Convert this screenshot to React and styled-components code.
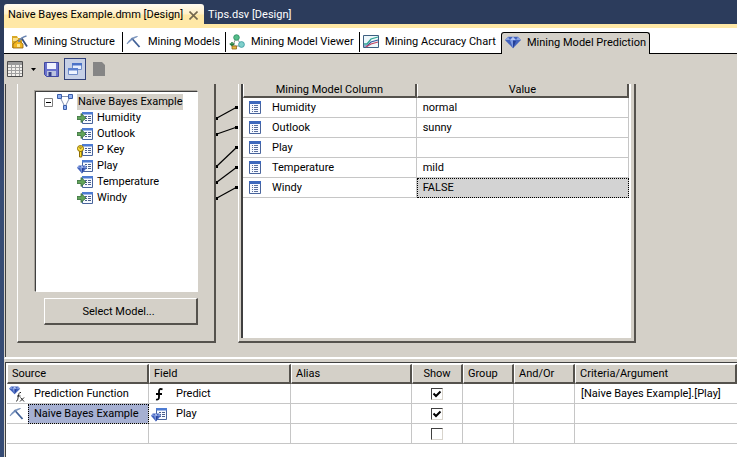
import React from "react";
import styled, { createGlobalStyle, css } from "styled-components";

const FACE = "#d4d0c8";
const DARK = "#404040";
const LINE = "#c6c6c6";
const NAVY = "#2c3c5c";

const Global = createGlobalStyle`
  *, *::before, *::after { box-sizing: border-box; }
  body { margin: 0; background: ${FACE}; }
  body, button, input, table {
    font: 11px/16px Roboto, "DejaVu Sans Condensed", sans-serif;
    color: #000;
  }
  button { margin: 0; padding: 0; border: 0; background: none; }
  svg { display: block; flex: none; }
`;

const Window = styled.div`
  display: flex;
  flex-direction: column;
  min-height: 100vh;
  padding-left: 4px;
  background: linear-gradient(${NAVY} 15%, #364b74 40%);
  overflow: hidden;
`;

const DocumentTabs = styled.div`
  display: flex;
  padding-top: 4px;
  border-bottom: 4px solid #ffe8a6;
  background: ${NAVY};
`;

const DocumentTab = styled.div`
  display: flex;
  align-items: center;
  justify-content: space-between;
  width: ${(p) => (p.$active ? "200px" : "auto")};
  height: 20px;
  padding: 2px 4px 0;
  white-space: nowrap;
  color: ${(p) => (p.$active ? "#000" : "#fff")};
  border-radius: 3px 3px 0 0;
  background: ${(p) => (p.$active ? "linear-gradient(#fffaf0, #fff0c8 50%, #ffe8a6 55%)" : "none")};
`;

const TabLabel = styled.button`
  color: inherit;
`;

const CloseButton = styled.button`
  display: grid;
  place-items: center;
  width: 14px;
  height: 14px;
`;

const ViewTabs = styled.div`
  display: flex;
  align-items: flex-end;
  height: 26px;
  background: linear-gradient(#000, #000) bottom / 100% 1px no-repeat #fff;
`;

const ViewTab = styled.button`
  display: flex;
  align-items: center;
  gap: 6px;
  width: ${(p) => p.$width}px;
  height: 22px;
  padding: 0 0 2px ${(p) => p.$inset}px;
  white-space: nowrap;
  ${(p) =>
    p.$active
      ? css`
          border: 1px solid #000;
          border-bottom: 0;
          border-radius: 3px 3px 0 0;
          background: ${FACE};
        `
      : css`
          background: ${p.$divided ? "linear-gradient(#000, #000) right top / 1px 20px no-repeat" : "none"};
        `}
`;

const Toolbar = styled.div`
  display: flex;
  align-items: center;
  gap: 2px;
  height: 30px;
  background: ${FACE};
`;

const ToolButton = styled.button`
  display: grid;
  place-items: center;
  width: ${(p) => (p.$narrow ? 10 : 22)}px;
  height: 22px;
  border: 1px solid ${(p) => (p.$pressed ? "#32427a" : "transparent")};
  background: ${(p) => (p.$pressed ? "#c6d0e6" : "none")};
`;

const Designer = styled.div`
  display: flex;
  align-items: flex-start;
  height: 275px;
  padding-left: 12px;
  border-left: 1px solid ${FACE};
  border-bottom: 2px solid #fff;
  background: linear-gradient(${DARK}, ${DARK}) left / 1px 100% no-repeat ${FACE};
`;

const ModelPanel = styled.section`
  display: flex;
  flex-direction: column;
  align-items: flex-end;
  gap: 6px;
  flex: none;
  width: 199px;
  height: 259px;
  padding: 7px 16px 16px;
  border: solid;
  border-width: 0 2px 2px 1px;
  border-color: #fff #55524d #55524d #fff;
`;

const Tree = styled.ul`
  flex: 1;
  width: 163px;
  margin: 0;
  padding: 2px 0 0 8px;
  list-style: none;
  border: 1px solid #fff;
  border-top-color: ${DARK};
  border-left-color: ${DARK};
  box-shadow: -1px -1px 0 #a8a49c;
  background: #fff;
`;

const TreeRoot = styled.div`
  display: flex;
  align-items: center;
  gap: 4px;
  height: 16px;
`;

const RootName = styled.span`
  padding: 0 1px;
  white-space: nowrap;
  background: ${FACE};
`;

const TreeChildren = styled.ul`
  margin: 0;
  padding: 0 0 0 33px;
  list-style: none;
`;

const TreeItem = styled.li`
  display: flex;
  align-items: center;
  gap: 4px;
  height: 16px;
`;

const SelectButton = styled.button`
  width: 154px;
  height: 27px;
  padding: 2px 4px 0 0;
  border: solid;
  border-width: 1px 2px 2px 1px;
  border-color: #fff #55524d #55524d #fff;
`;

const Connectors = styled.svg`
  flex: none;
  width: 22px;
  height: 130px;
`;

const ColumnsPanel = styled.section`
  flex: 0 1 398px;
  height: 259px;
  padding: 0 3px 3px 2px;
  border: solid;
  border-width: 0 2px 2px 1px;
  border-color: #fff #55524d #55524d #fff;
`;

const ColumnsBody = styled.div`
  height: 100%;
  padding-right: 2px;
  border-left: 2px solid ${DARK};
  background: #fff;
`;

const Table = styled.table`
  width: 100%;
  table-layout: fixed;
  border-collapse: separate;
  border-spacing: 0;
`;

const HeadCell = styled.th`
  height: ${(p) => p.$height}px;
  padding: 0 4px;
  font-weight: normal;
  line-height: 12px;
  white-space: nowrap;
  text-align: ${(p) => p.$align || "left"};
  border: solid;
  border-width: ${(p) => (p.$clipped ? 0 : 1)}px 2px 2px 1px;
  border-color: #fff #55524d #55524d #fff;
  background: ${FACE};
`;

const Cell = styled.td`
  height: 20px;
  padding: 0 0 0 ${(p) => p.$inset || 0}px;
  white-space: nowrap;
  text-align: ${(p) => p.$align || "left"};
  border-bottom: 1px solid ${LINE};
  border-right: ${(p) => (p.$open ? "0" : `1px solid ${LINE}`)};
  ${(p) =>
    p.$selected &&
    css`
      background: ${p.$selected};
      outline: 1px dotted #000;
      outline-offset: -1px;
    `}
`;

const IconText = styled.div`
  display: flex;
  align-items: center;
  gap: ${(p) => p.$gap}px;
`;

const QueryGrid = styled.section`
  flex: 1;
  padding: 1px 0 0 1px;
  border-top: 1px solid ${DARK};
  border-left: 1px solid ${DARK};
  background: #fff;
`;

const Gutter = styled.div`
  flex: 1;
  display: flex;
  flex-direction: column;
  padding: 3px 0 0 1px;
  background: ${FACE};
`;

const CheckBox = styled.input`
  appearance: none;
  display: block;
  width: 12px;
  height: 12px;
  margin: 0 auto;
  border: 1px solid #d8d4cc;
  border-top-color: ${DARK};
  border-left-color: ${DARK};
  background: #fff;
  &:checked {
    background: #fff url("data:image/svg+xml,%3Csvg xmlns='http://www.w3.org/2000/svg' viewBox='0 0 10 10'%3E%3Cpath d='M1.5 4.5 4 7 8.5 2.5' fill='none' stroke='%23000' stroke-width='2'/%3E%3C/svg%3E") center / 10px 10px no-repeat;
  }
`;

const Pick = () => (
  <svg width="16" height="16" viewBox="0 0 16 16" fill="none">
    <path d="M5.500 4 13.500 13" stroke="#3f5f96" strokeWidth="1.800" />
    <path d="M1 10C2.500 6.500 6 3 11.500 2.500L7 4.800z" fill="#5a7db8" stroke="#7e95bb" strokeWidth=".8" />
  </svg>
);

const StructureIcon = () => (
  <svg width="16" height="16" viewBox="0 0 16 16">
    <path d="M0 2h5l1 2h4v10H0z" fill="#d9a826" />
    <path d="M1 4h5v3H1z" fill="#fbe08a" />
    <path d="M1 14V10l5-4 5 4v4z" fill="#f2b51e" stroke="#8a6314" strokeWidth=".8" />
    <path d="M9.500 4 15 12.500" stroke="#39507c" strokeWidth="1.800" />
    <path d="M6.500 8C8 5 10 3 14.500 2" fill="none" stroke="#6b86b3" strokeWidth="1.500" />
    <path d="M5 10h3v3H5z" fill="#ffe68a" />
  </svg>
);

const ViewerIcon = () => (
  <svg width="16" height="16" viewBox="0 0 16 16" fill="none">
    <path d="M7 4 4 11M8 5l4 5M4 12h8" stroke="#8a8f8a" />
    <circle cx="7.500" cy="3.500" r="2.800" fill="#55bd8a" stroke="#2b8a5e" strokeWidth=".8" />
    <circle cx="12.500" cy="10.500" r="2.900" fill="#7fd0cb" stroke="#3a98a0" strokeWidth=".8" />
    <path d="M3 8v4M.8 9.500l2.200 2 2.500-2" stroke="#267f3f" strokeWidth="1.500" />
    <path d="M3 12h4.500v3H3z" fill="#e7b83d" stroke="#93661c" strokeWidth=".8" />
  </svg>
);

const ChartIcon = () => (
  <svg width="16" height="14" viewBox="0 0 16 14" fill="none">
    <path d="M.5.5h15v12H.5z" fill="#eef7fb" stroke="#3d5f81" />
    <path d="M1 9h3l4-5 7-2" stroke="#2da592" strokeWidth="1.300" />
    <path d="M1 11h3l4-4 7-2" stroke="#315ca0" strokeWidth="1.200" />
    <path d="M3 12l5-3 7-2" stroke="#c24562" strokeWidth="1.200" />
  </svg>
);

const GemShape = () => (
  <>
    <path d="M3 1h10l3 4-8 10L0 5z" fill="#4363bd" />
    <path d="M3 1 0 5h5zM13 1 11 5h5z" fill="#8ba4e3" />
    <path d="M5 5 8 1l3 4z" fill="#b5c7f5" />
    <path d="M5 5h3v10z" fill="#7e9be2" />
    <path d="M8 6h3L8 15z" fill="#253f94" />
  </>
);

const Gem = () => (
  <svg width="16" height="13" viewBox="0 0 16 16" preserveAspectRatio="none">
    <GemShape />
  </svg>
);

const GridIcon = () => (
  <svg width="16" height="16" viewBox="0 0 16 16">
    <path d="M.5.5h15v15H.5z" fill="#f2f0ec" stroke="#4a4a4a" />
    <path d="M1 1h14v3H1z" fill="#9a9a9a" />
    <path d="M1 6.500h14M1 9.500h14M1 12.500h14M4.500 4v11M8.500 4v11M12.500 4v11" stroke="#a0a0a0" />
  </svg>
);

const SaveIcon = () => (
  <svg width="15" height="15" viewBox="0 0 15 15">
    <path d="M.5.5h14v14h-12l-2-2z" fill="#6a72cc" stroke="#4048a0" />
    <path d="M3 1h9v6H3z" fill="#f0f3ff" />
    <path d="M3 9h9v5H3z" fill="#bcc3df" />
    <path d="M4.500 10h3v4h-3z" fill="#343e8b" />
  </svg>
);

const WindowsIcon = () => (
  <svg width="14" height="14" viewBox="0 0 14 14">
    <path d="M4.500 1.500h9v6h-9z" fill="#e7efff" stroke="#6f8cc8" />
    <path d="M4 1h10v2.500H4z" fill="#4a72c8" />
    <path d="M.5 6.500h9v6h-9z" fill="#eef4ff" stroke="#6f8cc8" />
    <path d="M0 6h10v2.500H0z" fill="#5a80d0" />
  </svg>
);

const PageIcon = () => (
  <svg width="12" height="14" viewBox="0 0 12 14">
    <path d="M0 0h9l3 3v11H0z" fill="#858585" />
  </svg>
);

const ModelIcon = () => (
  <svg width="16" height="16" viewBox="0 0 16 16" fill="none">
    <path d="M3 2.500h10M3 3l5 10M13 3 8 13" stroke="#8492b0" />
    <path d="M.5.500h4v4h-4zM11.500.500h4v4h-4z" fill="#8fb0f2" stroke="#3c5ea8" />
    <path d="M6.500 11.500h3v4h-3z" fill="#8fb0f2" stroke="#3c5ea8" />
  </svg>
);

const ColumnSheet = () => (
  <>
    <path d="M5.500 2.500h10v11h-10z" fill="#f7faff" stroke="#48649c" />
    <path d="M5 2h11v2.500H5z" fill="#4d7bd2" />
    <path d="M8 6.500h2m1 0h3M8 8.500h2m1 0h3M8 10.500h2m1 0h3" stroke="#4a5f8d" />
  </>
);

const badges = {
  input: <path d="M0 6.500h4V3.500l5 4.500-5 4.500V9.500H0z" fill="#62a35a" stroke="#34693a" strokeWidth=".8" />,
  key: (
    <g fill="none" stroke="#8e6d00">
      <circle cx="3.500" cy="6.500" r="3" fill="#ffe43d" />
      <circle cx="3.500" cy="5.800" r=".8" fill="#fff" />
      <path d="M2.500 9.500h2.200v5.500H2.500z" fill="#ffdf2b" />
    </g>
  ),
  predict: (
    <g transform="translate(0 7) scale(.62 .56)">
      <GemShape />
    </g>
  ),
};

const FieldIcon = ({ kind }) => (
  <svg width="16" height="16" viewBox="0 0 16 16">
    <ColumnSheet />
    {badges[kind]}
  </svg>
);

const ColumnIcon = () => (
  <svg width="12" height="13" viewBox="0 0 12 13">
    <path d="M.5.500h11v12H.5z" fill="#f7faff" stroke="#48649c" />
    <path d="M0 0h12v3H0z" fill="#3d68bd" />
    <path d="M3 4.500h1m1 0h4M3 6.500h1m1 0h4M3 8.500h1m1 0h4M3 10.500h1m1 0h4" stroke="#5a6f9d" />
  </svg>
);

const GemFunctionIcon = () => (
  <svg width="16" height="16" viewBox="0 0 16 16" fill="none">
    <g transform="scale(.7 .55)">
      <GemShape />
    </g>
    <path d="M12 6.500C10 6 9.800 8 9.300 10.500S8.500 15.500 7 15M8 10h3.500M11.500 11.500l3.500 4M15 11.500l-4 4" stroke="#222" />
  </svg>
);

const FunctionIcon = () => (
  <svg width="16" height="16" viewBox="0 0 16 16" fill="none">
    <path d="M11.500 3.500C9 2 8 3.500 8 5.500V11c0 2-1 3-3 2.500M5 8h6" stroke="#000" strokeWidth="1.800" />
  </svg>
);

const views = [
  { label: "Mining Structure", icon: <StructureIcon />, width: 119, inset: 8, divided: true },
  { label: "Mining Models", icon: <Pick />, width: 103, inset: 3, divided: true },
  { label: "Mining Model Viewer", icon: <ViewerIcon />, width: 134, inset: 3, divided: true },
  { label: "Mining Accuracy Chart", icon: <ChartIcon />, width: 141, inset: 3 },
  { label: "Mining Model Prediction", icon: <Gem />, width: 149, inset: 3, active: true },
];

const fields = [
  ["Humidity", "input"],
  ["Outlook", "input"],
  ["P Key", "key"],
  ["Play", "predict"],
  ["Temperature", "input"],
  ["Windy", "input"],
];

const mappings = [
  ["Humidity", "normal"],
  ["Outlook", "sunny"],
  ["Play", ""],
  ["Temperature", "mild"],
  ["Windy", "FALSE"],
];

const links = [
  [34, 23],
  [50, 43],
  [82, 63],
  [98, 83],
  [114, 103],
];

const criteria = [
  {
    icon: <GemFunctionIcon />,
    source: "Prediction Function",
    field: "Predict",
    fieldIcon: <FunctionIcon />,
    show: true,
    argument: "[Naive Bayes Example].[Play]",
  },
  { icon: <Pick />, source: "Naive Bayes Example", field: "Play", fieldIcon: <FieldIcon kind="predict" />, show: true, selected: true },
  { source: "", field: "", show: false },
];

export default function App() {
  return (
    <Window>
      <Global />
      <DocumentTabs>
        <DocumentTab $active>
          <TabLabel>Naive Bayes Example.dmm [Design]</TabLabel>
          <CloseButton aria-label="Close">
            <svg width="9" height="9" viewBox="0 0 9 9">
              <path d="M.5.500l8 8M8.500.500l-8 8" stroke="#75694f" strokeWidth="1.600" />
            </svg>
          </CloseButton>
        </DocumentTab>
        <DocumentTab>
          <TabLabel>Tips.dsv [Design]</TabLabel>
        </DocumentTab>
      </DocumentTabs>

      <ViewTabs>
        {views.map((v) => (
          <ViewTab key={v.label} $width={v.width} $inset={v.inset} $divided={v.divided} $active={v.active}>
            {v.icon}
            {v.label}
          </ViewTab>
        ))}
      </ViewTabs>

      <Toolbar>
        <ToolButton aria-label="View"><GridIcon /></ToolButton>
        <ToolButton $narrow aria-label="View options">
          <svg width="5" height="3" viewBox="0 0 5 3"><path d="M0 0h5L2.500 3z" /></svg>
        </ToolButton>
        <ToolButton aria-label="Save"><SaveIcon /></ToolButton>
        <ToolButton $pressed aria-label="Singleton query"><WindowsIcon /></ToolButton>
        <ToolButton disabled aria-label="Properties"><PageIcon /></ToolButton>
      </Toolbar>

      <Designer>
        <ModelPanel>
          <Tree>
            <li>
              <TreeRoot>
                <svg width="9" height="9" viewBox="0 0 9 9">
                  <path d="M.5.500h8v8h-8z" fill="#fff" stroke="#808080" />
                  <path d="M2 4.500h5" stroke="#000" />
                </svg>
                <ModelIcon />
                <RootName>Naive Bayes Example</RootName>
              </TreeRoot>
              <TreeChildren>
                {fields.map(([name, kind]) => (
                  <TreeItem key={name}>
                    <FieldIcon kind={kind} />
                    {name}
                  </TreeItem>
                ))}
              </TreeChildren>
            </li>
          </Tree>
          <SelectButton>Select Model...</SelectButton>
        </ModelPanel>

        <Connectors viewBox="0 0 22 130">
          {links.map(([from, to]) => (
            <g key={from}>
              <path d={`M1 ${from} 21 ${to}`} stroke="#000" strokeWidth="1.200" />
              <path d={`M0 ${from - 1}h2v3H0zM19 ${to - 1}h3v3h-3z`} />
            </g>
          ))}
        </Connectors>

        <ColumnsPanel>
          <ColumnsBody>
            <Table>
              <colgroup>
                <col width="45%" />
                <col />
              </colgroup>
              <thead>
                <tr>
                  <HeadCell $clipped $height={13} $align="center">Mining Model Column</HeadCell>
                  <HeadCell $clipped $height={13} $align="center">Value</HeadCell>
                </tr>
              </thead>
              <tbody>
                {mappings.map(([name, value]) => (
                  <tr key={name}>
                    <Cell $inset={6}>
                      <IconText $gap={11}>
                        <ColumnIcon />
                        {name}
                      </IconText>
                    </Cell>
                    <Cell $inset={6} $selected={name === "Windy" && "#d3d3d3"}>{value}</Cell>
                  </tr>
                ))}
              </tbody>
            </Table>
          </ColumnsBody>
        </ColumnsPanel>
      </Designer>

      <Gutter>
        <QueryGrid>
          <Table>
            <colgroup>
              <col width="21" />
              <col width="121" />
              <col width="142" />
              <col width="121" />
              <col width="51" />
              <col width="51" />
              <col width="61" />
              <col />
            </colgroup>
            <thead>
              <tr>
                <HeadCell $height={20} colSpan={2}>Source</HeadCell>
                <HeadCell $height={20}>Field</HeadCell>
                <HeadCell $height={20}>Alias</HeadCell>
                <HeadCell $height={20} $align="center">Show</HeadCell>
                <HeadCell $height={20}>Group</HeadCell>
                <HeadCell $height={20}>And/Or</HeadCell>
                <HeadCell $height={20}>Criteria/Argument</HeadCell>
              </tr>
            </thead>
            <tbody>
              {criteria.map((c, i) => (
                <tr key={i}>
                  <Cell $open $inset={2}>{c.icon}</Cell>
                  <Cell $inset={6} $selected={c.selected && "#a6b0d2"}>{c.source}</Cell>
                  <Cell $inset={2}>
                    <IconText $gap={9}>
                      {c.fieldIcon}
                      {c.field}
                    </IconText>
                  </Cell>
                  <Cell />
                  <Cell $align="center">
                    <CheckBox type="checkbox" defaultChecked={c.show} aria-label={`Show row ${i + 1}`} />
                  </Cell>
                  <Cell />
                  <Cell />
                  <Cell $open $inset={6}>{c.argument}</Cell>
                </tr>
              ))}
            </tbody>
          </Table>
        </QueryGrid>
      </Gutter>
    </Window>
  );
}
